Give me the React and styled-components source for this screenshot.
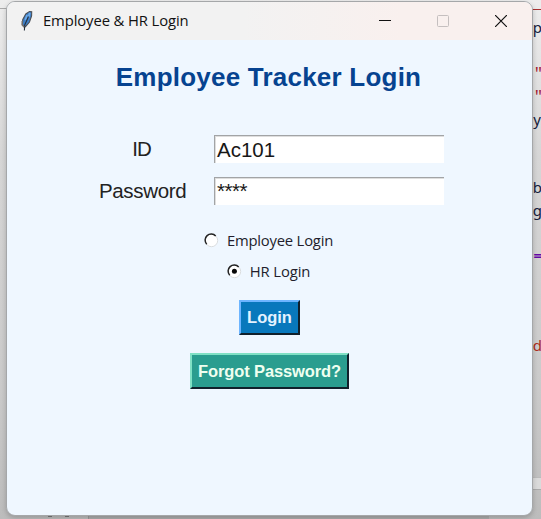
import React from "react";
import styled, { createGlobalStyle } from "styled-components";

const GlobalStyle = createGlobalStyle`
  * { box-sizing: border-box; }
  body { margin: 0; overflow: hidden; }
`;

const Desktop = styled.div`
  position: relative;
  width: 541px;
  height: 519px;
  padding: 1px 0 0 6px;
  overflow: hidden;
  background:
    linear-gradient(#aaa, #aaa) 0 8px / 7px 1px no-repeat,
    linear-gradient(#a33, #a33) 532px 9px / 9px 1px no-repeat,
    linear-gradient(#bbb, #bbb) 532px 477px / 9px 1px no-repeat,
    linear-gradient(#dadada, #dadada) 532px 478px / 9px 11px no-repeat,
    linear-gradient(#aaa, #aaa) 532px 489px / 9px 1px no-repeat,
    linear-gradient(#777, #777) 48px 515px / 4px 2px no-repeat,
    linear-gradient(#777, #777) 65px 515px / 4px 2px no-repeat,
    linear-gradient(#999, #999) 88px 515px / 1px 4px no-repeat,
    linear-gradient(#acacac, #acacac) 89px 515px / 400px 4px no-repeat,
    linear-gradient(#ededed, #d6d6d6 30%, #cacaca 75%, #bcbcbc);
`;

const CodeFragment = styled.span`
  position: absolute;
  right: ${(p) => p.$right || 0}px;
  top: ${(p) => p.$top}px;
  font: ${(p) => p.$weight || 400} ${(p) => p.$size || 15}px/20px "Noto Sans", sans-serif;
  color: ${(p) => p.$color || "#16213c"};
  white-space: nowrap;
`;

const Window = styled.main`
  position: relative;
  width: 527px;
  height: 515px;
  overflow: hidden;
  border: 1px solid #a5a7a9;
  border-radius: 9px;
  background: #eff7ff;
  box-shadow: 0 2px 5px rgba(0, 0, 0, 0.2);
`;

const TitleBar = styled.header`
  display: flex;
  align-items: center;
  height: 38px;
  padding-left: 13px;
  background: linear-gradient(90deg, #f2f2f2 0 45%, #f9f0ee 75%);
`;

const WindowTitle = styled.span`
  margin-left: 9px;
  padding-bottom: 2px;
  flex: 1;
  font: 14.8px/20px "Open Sans", sans-serif;
  letter-spacing: ${(p) => p.$tracking}px;
  color: #111;
`;

const Controls = styled.div`
  display: flex;
  gap: 46px;
  margin-right: 25px;
`;

const Body = styled.form`
  display: flex;
  flex-direction: column;
  align-items: center;
  padding-top: 20px;
`;

const Heading = styled.h1`
  margin: 0 2px 0 0;
  height: 75px;
  font: bold 26px/34px "Liberation Sans", Arial, sans-serif;
  letter-spacing: ${(p) => p.$tracking}px;
  white-space: nowrap;
  color: #064390;
`;

const Fields = styled.div`
  display: grid;
  grid-template-columns: 85px 230px;
  column-gap: 30px;
  row-gap: 14px;
  margin-left: 4px;
`;

const FieldLabel = styled.label`
  font: 20.5px/28px "Liberation Sans", Arial, sans-serif;
  letter-spacing: ${(p) => p.$tracking || 0}px;
  text-align: center;
  white-space: nowrap;
  color: #222;
`;

const Field = styled.div`
  height: 28px;
  padding-left: 2px;
  border: solid #a2a4a6;
  border-width: 1px 0 0 1px;
  background: #fff;
  box-shadow: inset 1px 1px #dedede;
  font: 20.5px/${(p) => p.$leading || 27}px "Liberation Sans", Arial, sans-serif;
  letter-spacing: ${(p) => p.$tracking || 0}px;
  color: #171717;
`;

const Radios = styled.div`
  display: flex;
  flex-direction: column;
  align-items: center;
  gap: 11px;
  margin: 25px 2px 0 0;
`;

const RadioRow = styled.label`
  display: flex;
  align-items: center;
  height: 20px;
  gap: 8px;
  font: 14.8px/20px "Open Sans", sans-serif;
  letter-spacing: ${(p) => p.$tracking}px;
  color: #221e2c;
`;

const RadioIcon = styled.svg`
  display: block;
`;

const RaisedButton = styled.button`
  width: ${(p) => p.$width}px;
  height: ${(p) => p.$height}px;
  margin: ${(p) => p.$top}px 0 0;
  padding: 0;
  border: 2px solid;
  border-color: ${(p) => p.$light} #10202b #10202b ${(p) => p.$light};
  background: ${(p) => p.$fill};
  font: bold 16.5px/31px "Liberation Sans", Arial, sans-serif;
  letter-spacing: ${(p) => p.$tracking || 0}px;
  white-space: nowrap;
  color: ${(p) => p.$ink};
`;

function Feather() {
  return (
    <svg width="14" height="22" viewBox="0 0 14 22">
      <path d="M4.5 17.5 2.3 14.5 2.8 9.5 5.8 4 9.5 1.5 11.7 1.8 11.6 6 9.5 12 6 16Z" fill="#3f80c9" stroke="#4b4f55" strokeWidth="1.1" />
      <path d="M9.7 2.8 8.6 7.2M7.1 5 5.3 10" stroke="#6ba9e8" strokeWidth="1.8" />
      <path d="M8.5 6.5 6.5 11 4.7 15 4.4 20.5" fill="none" stroke="#27313d" strokeWidth="1.1" />
      <path d="M2.2 11v4l2 2" fill="none" stroke="#74706d" strokeWidth="1.4" />
    </svg>
  );
}

function Radio({ label, checked, tracking }) {
  return (
    <RadioRow $tracking={tracking}>
      <RadioIcon width="15" height="15" viewBox="0 0 15 15">
        <circle cx="7.5" cy="7.5" r="6.2" fill="#fff" stroke="#dadddf" />
        <path d="M2.7 11.2A6 6 0 0 1 11.7 3" fill="none" stroke="#242424" strokeWidth="1.5" />
        {checked && <circle cx="7.4" cy="7.2" r="2.5" fill="#080808" />}
      </RadioIcon>
      {label}
    </RadioRow>
  );
}

export default function App() {
  return (
    <>
      <GlobalStyle />
      <Desktop>
        <CodeFragment $top={17} $right={-1}>p</CodeFragment>
        <CodeFragment $top={63} $size={18} $right={-1} $color="#a31c35">"</CodeFragment>
        <CodeFragment $top={86} $size={18} $right={-1} $color="#a31c35">"</CodeFragment>
        <CodeFragment $top={109}>ly</CodeFragment>
        <CodeFragment $top={177} $right={-1}>ab</CodeFragment>
        <CodeFragment $top={200} $right={-1}>og</CodeFragment>
        <CodeFragment $top={245} $right={-1} $weight={700} $color="#6408a8">=</CodeFragment>
        <CodeFragment $top={335} $right={-1} $color="#ad2c20">ed</CodeFragment>
        <Window>
          <TitleBar>
            <Feather />
            <WindowTitle $tracking={-0.1}>Employee &amp; HR Login</WindowTitle>
            <Controls>
              <svg width="12" height="12"><path d="M0 5.5h12" stroke="#111" /></svg>
              <svg width="12" height="12"><rect x=".5" y=".5" width="11" height="11" rx="1" fill="none" stroke="#c5bfbf" /></svg>
              <svg width="12" height="12"><path d="m0 0 12 12M12 0 0 12" stroke="#111" strokeWidth="1.2" /></svg>
            </Controls>
          </TitleBar>
          <Body>
            <Heading $tracking={0.22}>Employee Tracker Login</Heading>
            <Fields>
              <FieldLabel $tracking={-1}>ID</FieldLabel>
              <Field>Ac101</Field>
              <FieldLabel $tracking={-0.35}>Password</FieldLabel>
              <Field $tracking={-0.5} $leading={25}>****</Field>
            </Fields>
            <Radios>
              <Radio label="Employee Login" tracking={-0.2} />
              <Radio label="HR Login" checked tracking={-0.1} />
            </Radios>
            <RaisedButton type="button" $width={61} $height={35} $top={19} $fill="#0878bc" $light="#6db5ff" $ink="#e4f2ff">Login</RaisedButton>
            <RaisedButton type="button" $width={159} $height={36} $top={18} $fill="#2a9d8f" $light="#80e1c5" $ink="#effff0" $tracking={-0.12}>Forgot Password?</RaisedButton>
          </Body>
        </Window>
      </Desktop>
    </>
  );
}
